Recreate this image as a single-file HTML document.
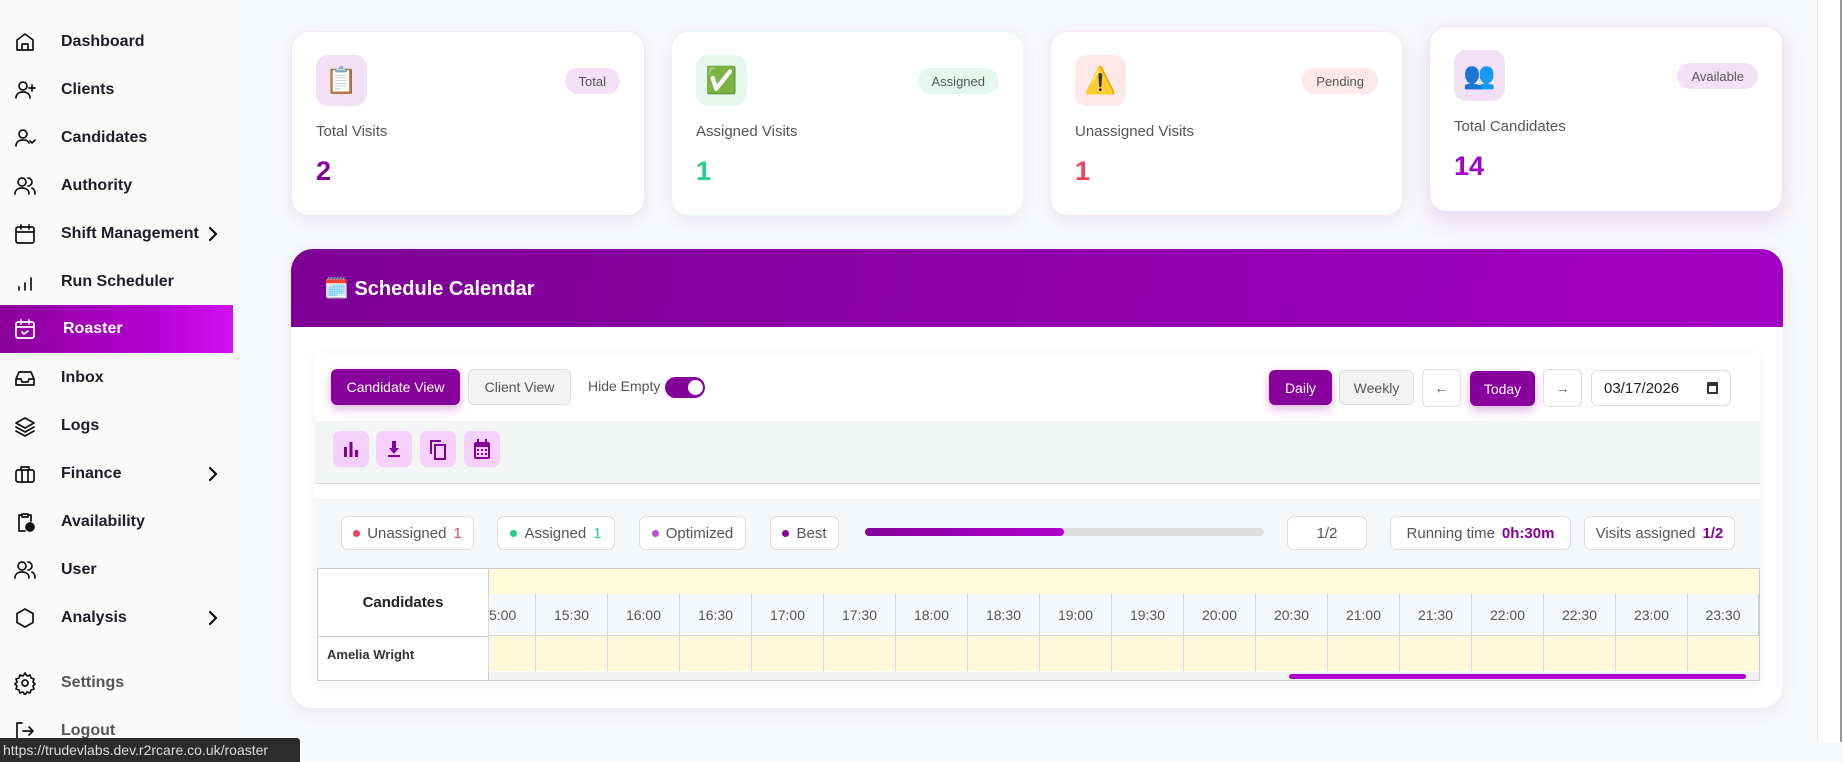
<!DOCTYPE html>
<html><head><meta charset="utf-8"><style>
*{box-sizing:border-box;margin:0;padding:0}
body{width:1843px;height:762px;overflow:hidden;background:#f7f8fa;font-family:"Liberation Sans",sans-serif;position:relative;color:#222}
.sb{position:absolute;left:0;top:0;width:233px;height:762px;background:#fafafa}
.ni{position:absolute;left:0;width:233px;height:48px;display:flex;align-items:center;font-weight:bold;font-size:16px;color:#1d1d2b}
.ni svg{position:absolute;left:13px;width:24px;height:24px;fill:none;stroke:#111;stroke-width:1.7;stroke-linecap:round;stroke-linejoin:round}
.ni span{position:absolute;left:61px}
.ni svg.ch{left:203px;width:20px;height:20px;stroke-width:2.2}
.act{background:linear-gradient(90deg,#8a0099,#b000cc 60%,#d010f0);color:#fff}
.act svg{stroke:#fff}
.card{position:absolute;background:#fff;border-radius:18px;box-shadow:0 4px 14px rgba(150,100,170,.12)}
.ib{position:absolute;left:24px;top:23px;width:51px;height:51px;border-radius:12px;display:flex;align-items:center;justify-content:center;font-size:26px}
.bd{position:absolute;top:36px;right:24px;height:26px;padding:0 14px;border-radius:13px;font-size:13px;color:#555;display:flex;align-items:center}
.lb{position:absolute;left:24px;top:91px;font-size:15px;color:#555}
.num{position:absolute;left:24px;top:124px;font-size:27px;font-weight:bold}
.btn{position:absolute;display:flex;align-items:center;justify-content:center;font-size:14px;border-radius:6px}
.pb{background:#88009b;color:#fff;box-shadow:0 4px 10px rgba(140,0,160,.3)}
.gb{background:#f3f3f3;border:1px solid #ddd;color:#555}
.wb{background:#fff;border:1px solid #ddd;color:#555}
.ic{position:absolute;top:431px;width:36px;height:36px;background:#f5d0fb;border-radius:7px;display:flex;align-items:center;justify-content:center}
.chip{position:absolute;top:516px;height:34px;background:#fff;border:1px solid #ddd;border-radius:7px;display:flex;align-items:center;justify-content:center;font-size:15px;color:#555;gap:7px}
.dot{width:7px;height:7px;border-radius:50%;display:inline-block}
.tc{position:absolute;top:594px;height:42px;border-left:1px solid #d8d8d8;border-bottom:1px solid #d8d8d8;background:#f6f7f9;font-size:14px;color:#555;display:flex;align-items:center;justify-content:center}
.bc{position:absolute;top:636px;height:35px;border-left:1px solid #ddd;background:#fff9d9}
</style></head><body>
<div class="sb">
<div class="ni" style="top:18px"><svg viewBox="0 0 24 24"><path d="M4 10l8-6 8 6v10H4z M9 20v-6h6v6"/></svg><span>Dashboard</span></div>
<div class="ni" style="top:66px"><svg viewBox="0 0 24 24"><circle cx="10" cy="8" r="4"/><path d="M3 20c0-4 3-6 7-6s7 2 7 6M19 7v6M16 10h6"/></svg><span>Clients</span></div>
<div class="ni" style="top:114px"><svg viewBox="0 0 24 24"><circle cx="10" cy="8" r="4"/><path d="M3 20c0-4 3-6 7-6s5 1 6 3M17 15l2 2 3-3"/></svg><span>Candidates</span></div>
<div class="ni" style="top:162px"><svg viewBox="0 0 24 24"><circle cx="9" cy="8" r="4"/><path d="M2 20c0-4 3-6 7-6s7 2 7 6M15 4a4 4 0 010 8M19 14c2 1 3 3 3 6"/></svg><span>Authority</span></div>
<div class="ni" style="top:210px"><svg viewBox="0 0 24 24"><rect x="3" y="5" width="18" height="16" rx="2"/><path d="M3 10h18M8 3v4M16 3v4"/></svg><span>Shift Management</span><svg class="ch" viewBox="0 0 20 20"><path d="M7 4l6 6-6 6"/></svg></div>
<div class="ni" style="top:258px"><svg viewBox="0 0 24 24"><path d="M6 20v-3M12 20v-7M18 20V8"/></svg><span>Run Scheduler</span></div>
<div class="ni act" style="top:305px"><svg viewBox="0 0 24 24"><rect x="3" y="5" width="18" height="16" rx="2"/><path d="M3 10h18M8 3v4M16 3v4M9 15l2 2 4-3"/></svg><span style="left:63px">Roaster</span></div>
<div class="ni" style="top:354px"><svg viewBox="0 0 24 24"><path d="M3 13l3-7h12l3 7v6H3z M3 13h5l1 3h6l1-3h5"/></svg><span>Inbox</span></div>
<div class="ni" style="top:402px"><svg viewBox="0 0 24 24"><path d="M12 4l9 5-9 5-9-5z M3 13l9 5 9-5M3 17l9 5 9-5"/></svg><span>Logs</span></div>
<div class="ni" style="top:450px"><svg viewBox="0 0 24 24"><rect x="3" y="8" width="18" height="12" rx="2"/><path d="M8 8V5h8v3M9 8v12M15 8v12"/></svg><span>Finance</span><svg class="ch" viewBox="0 0 20 20"><path d="M7 4l6 6-6 6"/></svg></div>
<div class="ni" style="top:498px"><svg viewBox="0 0 24 24"><path d="M9 4h6v3H9z M9 5H6v16h6M15 5h3v6"/><circle cx="17" cy="17" r="4" fill="#111"/></svg><span>Availability</span></div>
<div class="ni" style="top:546px"><svg viewBox="0 0 24 24"><circle cx="9" cy="8" r="4"/><path d="M2 20c0-4 3-6 7-6s7 2 7 6M15 4a4 4 0 010 8M19 14c2 1 3 3 3 6"/></svg><span>User</span></div>
<div class="ni" style="top:594px"><svg viewBox="0 0 24 24"><path d="M12 3l8 4.5v9L12 21l-8-4.5v-9z"/></svg><span>Analysis</span><svg class="ch" viewBox="0 0 20 20"><path d="M7 4l6 6-6 6"/></svg></div>
<div class="ni" style="top:659px;color:#555"><svg viewBox="0 0 24 24"><circle cx="12" cy="12" r="3"/><path d="M12 2l2 3 3-1 1 3 3 1-1 3 2 2-2 2 1 3-3 1-1 3-3-1-2 3-2-3-3 1-1-3-3-1 1-3-2-2 2-2-1-3 3-1 1-3 3 1z"/></svg><span>Settings</span></div>
<div class="ni" style="top:707px;color:#555"><svg viewBox="0 0 24 24"><path d="M9 4H4v16h5M10 12h10M16 8l4 4-4 4"/></svg><span>Logout</span></div>
</div>
<div style="position:absolute;left:0;top:738px;width:300px;height:24px;background:#2b2b2b;color:#ddd;font-size:14px;line-height:24px;padding-left:3px;border-top-right-radius:3px">https://trudevlabs.dev.r2rcare.co.uk/roaster</div>
<div style="position:absolute;left:1817px;top:0;width:26px;height:742px;background:#fff;border-left:1px solid #e8e8e8"></div>
<div style="position:absolute;left:1840px;top:0;width:2px;height:742px;background:#999"></div>

<div class="card" style="left:291px;top:31px;width:354px;height:185px;border:1px solid #f3e6f5"><div class="ib" style="background:#f2e1f5">📋</div><div class="bd" style="background:#f2e1f5">Total</div><div class="lb">Total Visits</div><div class="num" style="color:#85009a">2</div></div>
<div class="card" style="left:671px;top:31px;width:353px;height:185px;border:1px solid #e6f7ef"><div class="ib" style="background:#e5f8ef">✅</div><div class="bd" style="background:#e5f8ef">Assigned</div><div class="lb">Assigned Visits</div><div class="num" style="color:#1fd18b">1</div></div>
<div class="card" style="left:1050px;top:31px;width:353px;height:185px;border:1px solid #fbe8ea"><div class="ib" style="background:#fde8ea">⚠️</div><div class="bd" style="background:#fde8ea">Pending</div><div class="lb">Unassigned Visits</div><div class="num" style="color:#f0435b">1</div></div>
<div class="card" style="left:1429px;top:26px;width:354px;height:186px;border:1px solid #f0e0f5;box-shadow:0 8px 22px rgba(160,60,200,.18)"><div class="ib" style="background:#f2e1f5">👥</div><div class="bd" style="background:#f2e1f5">Available</div><div class="lb">Total Candidates</div><div class="num" style="color:#a500c8">14</div></div>

<div class="card" style="left:291px;top:249px;width:1492px;height:459px;overflow:hidden;border-radius:22px">
<div style="height:78px;background:linear-gradient(100deg,#7d0094,#a300c2);color:#fff;font-weight:bold;font-size:20px;padding:27px 0 0 33px">🗓️ Schedule Calendar</div>
</div>
<div style="position:absolute;left:315px;top:353px;width:1445px;height:329px;background:#fff;box-shadow:0 2px 10px rgba(0,0,0,.06)"></div>
<div style="position:absolute;left:315px;top:421px;width:1445px;height:63px;background:#f3f6f5;border-bottom:1px solid #ddd"></div>
<div style="position:absolute;left:315px;top:499px;width:1445px;height:69px;background:#f6f7f9"></div>

<div class="btn pb" style="left:331px;top:369px;width:129px;height:36px">Candidate View</div>
<div class="btn gb" style="left:468px;top:369px;width:103px;height:36px">Client View</div>
<div style="position:absolute;left:588px;top:378px;font-size:14px;color:#555">Hide Empty</div>
<div style="position:absolute;left:665px;top:377px;width:40px;height:21px;border-radius:11px;background:#85009a"><div style="position:absolute;right:2px;top:3px;width:15px;height:15px;border-radius:50%;background:#fff"></div></div>

<div class="btn pb" style="left:1269px;top:370px;width:63px;height:35px">Daily</div>
<div class="btn gb" style="left:1339px;top:370px;width:75px;height:35px">Weekly</div>
<div class="btn wb" style="left:1422px;top:369px;width:39px;height:38px">←</div>
<div class="btn pb" style="left:1470px;top:371px;width:65px;height:35px">Today</div>
<div class="btn wb" style="left:1543px;top:369px;width:39px;height:38px">→</div>
<div class="btn wb" style="left:1591px;top:370px;width:140px;height:36px;justify-content:space-between;padding:0 12px;color:#222;font-size:15px">03/17/2026 <span style="display:inline-block;width:11px;height:12px;border:2px solid #333;border-top-width:4px;border-radius:1px"></span></div>

<div class="ic" style="left:333px"><svg width="20" height="20" viewBox="0 0 20 20" fill="#85009a"><rect x="3" y="8" width="3" height="10"/><rect x="8.5" y="3" width="3" height="15"/><rect x="14" y="11" width="3" height="7"/></svg></div>
<div class="ic" style="left:376px"><svg width="20" height="20" viewBox="0 0 20 20" fill="#85009a"><path d="M8 2h4v7h3l-5 6-5-6h3z"/><rect x="4" y="16" width="12" height="2"/></svg></div>
<div class="ic" style="left:420px"><svg width="22" height="22" viewBox="0 0 22 22" fill="none" stroke="#85009a" stroke-width="2"><path d="M4 16V3h10"/><rect x="8" y="7" width="10" height="14"/></svg></div>
<div class="ic" style="left:464px"><svg width="20" height="22" viewBox="0 0 20 22" fill="#85009a"><rect x="2" y="4" width="16" height="17" rx="2"/><rect x="5" y="1" width="2" height="5"/><rect x="13" y="1" width="2" height="5"/><g fill="#f5d0fb"><rect x="4" y="9" width="12" height="10"/></g><g fill="#85009a"><rect x="5" y="11" width="2" height="2"/><rect x="9" y="11" width="2" height="2"/><rect x="13" y="11" width="2" height="2"/><rect x="5" y="15" width="2" height="2"/><rect x="9" y="15" width="2" height="2"/><rect x="13" y="15" width="2" height="2"/></g></svg></div>

<div class="chip" style="left:341px;width:133px"><span class="dot" style="background:#f0435b"></span>Unassigned <b style="color:#f0435b;font-weight:normal">1</b></div>
<div class="chip" style="left:497px;width:118px"><span class="dot" style="background:#1fd18b"></span>Assigned <b style="color:#1fd18b;font-weight:normal">1</b></div>
<div class="chip" style="left:639px;width:107px"><span class="dot" style="background:#c34bd8"></span>Optimized</div>
<div class="chip" style="left:770px;width:69px"><span class="dot" style="background:#85009a"></span>Best</div>
<div style="position:absolute;left:865px;top:528px;width:399px;height:8px;border-radius:4px;background:#ddd"><div style="width:199px;height:8px;border-radius:4px;background:linear-gradient(90deg,#85009a,#b000cc)"></div></div>
<div class="chip" style="left:1287px;width:80px">1/2</div>
<div class="chip" style="left:1390px;width:181px">Running time <b style="color:#85009a">0h:30m</b></div>
<div class="chip" style="left:1584px;width:151px">Visits assigned <b style="color:#85009a">1/2</b></div>

<div style="position:absolute;left:317px;top:568px;width:1443px;height:113px;border:1px solid #ccc;background:#fff;overflow:hidden">
<div style="position:absolute;left:171px;top:0;right:0;height:26px;background:#fffad9;border-bottom:1px solid #d8d8d8"></div>
<div style="position:absolute;left:0;top:0;width:171px;height:68px;border-bottom:1px solid #ccc;border-right:1px solid #ccc;display:flex;align-items:center;justify-content:center;font-weight:bold;font-size:15px">Candidates</div>
<div style="position:absolute;left:0;top:68px;width:171px;height:44px;border-right:1px solid #ccc;font-weight:bold;font-size:13px;padding:10px 0 0 9px;color:#333">Amelia Wright</div>
<div style="position:absolute;left:171px;top:103px;right:0;height:9px;background:#f1f1f1"></div>
<div style="position:absolute;left:971px;top:105px;width:457px;height:5px;border-radius:3px;background:#b000cc"></div>
</div>
<div class="tc" style="left:488px;width:47px;justify-content:flex-start">5:00</div>
<div class="tc" style="left:535px;width:72px">15:30</div><div class="tc" style="left:607px;width:72px">16:00</div><div class="tc" style="left:679px;width:72px">16:30</div><div class="tc" style="left:751px;width:72px">17:00</div><div class="tc" style="left:823px;width:72px">17:30</div><div class="tc" style="left:895px;width:72px">18:00</div><div class="tc" style="left:967px;width:72px">18:30</div><div class="tc" style="left:1039px;width:72px">19:00</div><div class="tc" style="left:1111px;width:72px">19:30</div><div class="tc" style="left:1183px;width:72px">20:00</div><div class="tc" style="left:1255px;width:72px">20:30</div><div class="tc" style="left:1327px;width:72px">21:00</div><div class="tc" style="left:1399px;width:72px">21:30</div><div class="tc" style="left:1471px;width:72px">22:00</div><div class="tc" style="left:1543px;width:72px">22:30</div><div class="tc" style="left:1615px;width:72px">23:00</div><div class="tc" style="left:1687px;width:72px;border-right:1px solid #ccc">23:30</div>
<div class="bc" style="left:488px;width:47px"></div><div class="bc" style="left:535px;width:72px"></div><div class="bc" style="left:607px;width:72px"></div><div class="bc" style="left:679px;width:72px"></div><div class="bc" style="left:751px;width:72px"></div><div class="bc" style="left:823px;width:72px"></div><div class="bc" style="left:895px;width:72px"></div><div class="bc" style="left:967px;width:72px"></div><div class="bc" style="left:1039px;width:72px"></div><div class="bc" style="left:1111px;width:72px"></div><div class="bc" style="left:1183px;width:72px"></div><div class="bc" style="left:1255px;width:72px"></div><div class="bc" style="left:1327px;width:72px"></div><div class="bc" style="left:1399px;width:72px"></div><div class="bc" style="left:1471px;width:72px"></div><div class="bc" style="left:1543px;width:72px"></div><div class="bc" style="left:1615px;width:72px"></div><div class="bc" style="left:1687px;width:72px"></div>
</body></html>
